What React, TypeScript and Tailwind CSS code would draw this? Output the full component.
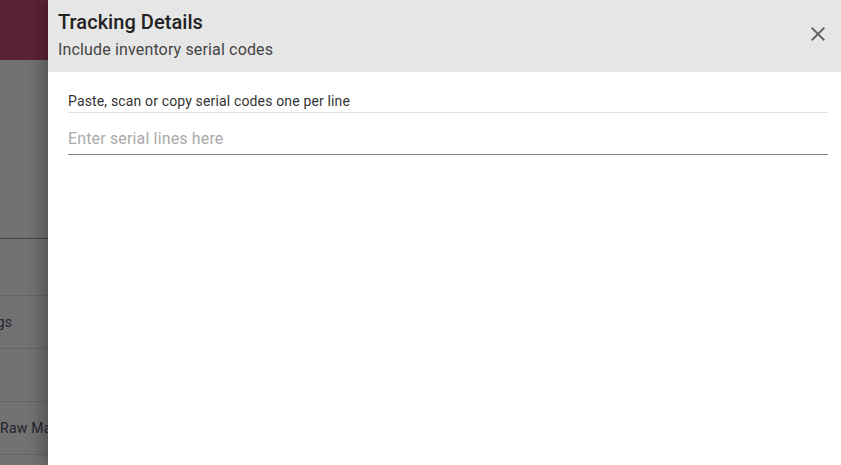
import React from "react";

export default function App() {
    return (
        <div className="relative h-[465px] w-[841px] overflow-hidden bg-[#727272] font-['Roboto',sans-serif]">

            {/* page behind the drawer (dimmed) */}
            <div className="flex h-full flex-col">
                <div className="h-[60px] bg-[#5c2334]" />
                <div className="h-[179px] border-b border-[#454545]" />
                <div className="h-[57px] border-b border-[#666666]" />
                <div className="flex h-[53px] items-center border-b border-[#666666]">
                    <span className="-ml-[38px] text-[14px] tracking-[0.15px] text-[#23232c]">Listings</span>
                </div>
                <div className="h-[53px] border-b border-[#666666]" />
                <div className="flex h-[53px] items-center border-b border-[#666666]">
                    <span className="text-[14px] tracking-[0.25px] text-[#23232c]">Raw Materials</span>
                </div>
            </div>

            {/* drawer */}
            <aside className="absolute inset-y-0 left-[48px] right-0 flex flex-col bg-white shadow-[-6px_0_14px_rgba(0,0,0,0.28)]">
                <header className="flex h-[72px] items-start justify-between bg-[#e6e6e6] pl-[10px] pr-[11px]">
                    <div className="pt-[8px]">
                        <h2 className="text-[20px] font-medium leading-[28px] tracking-[0.05px] text-[#222222]">Tracking Details</h2>
                        <p className="mt-[2px] text-[16px] leading-[24px] tracking-[0.15px] text-[#444444]">Include inventory serial codes</p>
                    </div>
                    <button className="mt-[22px] flex h-[24px] w-[24px] items-center justify-center text-[#666666]">
                        <svg viewBox="0 0 24 24" className="h-[24px] w-[24px]" fill="currentColor">
                            <path d="M19 6.41 17.59 5 12 10.59 6.41 5 5 6.41 10.59 12 5 17.59 6.41 19 12 13.41 17.59 19 19 17.59 13.41 12z" />
                        </svg>
                    </button>
                </header>

                <div className="pl-[20px] pr-[13px] pt-[19px]">
                    <p className="border-b border-[#e0e0e0] pb-[1px] text-[14px] leading-[20px] tracking-[0.15px] text-[#333333]">
                        Paste, scan or copy serial codes one per line
                    </p>
                    <textarea
                        rows={1}
                        placeholder="Enter serial lines here"
                        className="mt-[14px] block h-[28px] w-full resize-none border-b border-[#8a8a8a] bg-transparent text-[16px] leading-[24px] tracking-[0.15px] text-[#333333] outline-none placeholder:text-[#aaaaaa]"
                    />
                </div>
            </aside>
        </div>
    );
}
